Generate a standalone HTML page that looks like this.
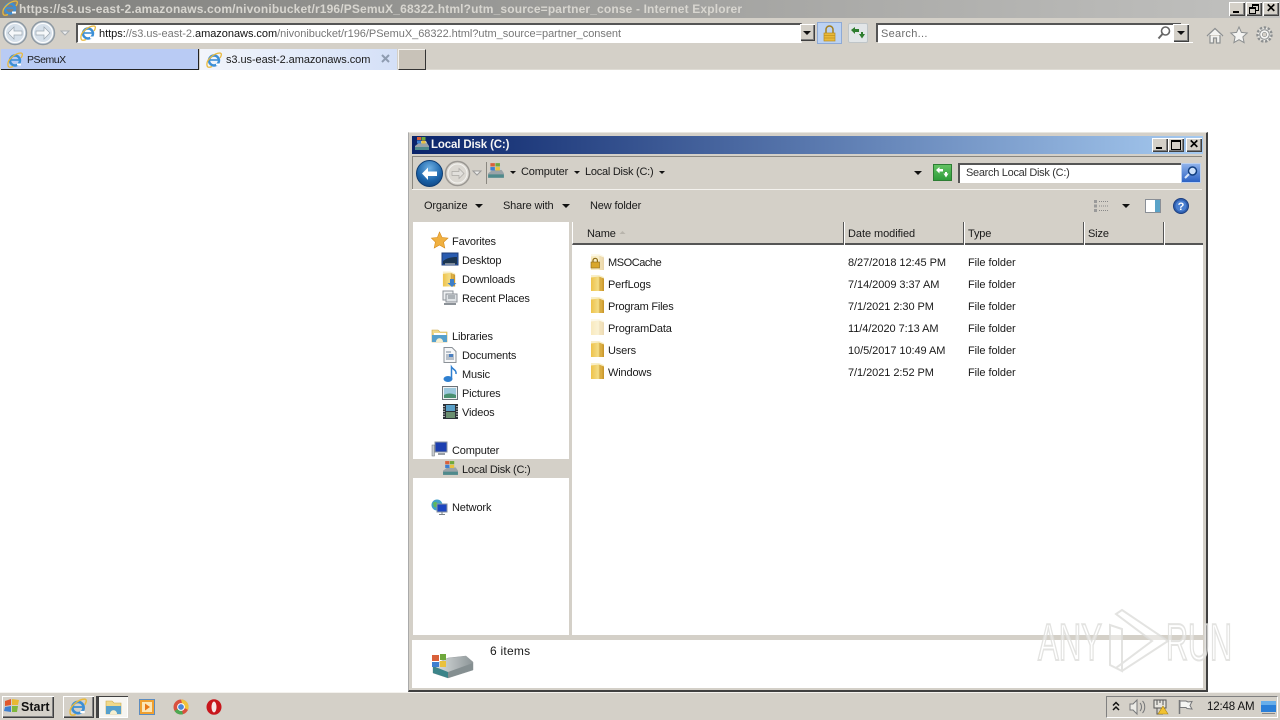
<!DOCTYPE html>
<html><head><meta charset="utf-8"><title>Local Disk (C:)</title>
<style>
html,body{margin:0;padding:0;width:1280px;height:720px;overflow:hidden;background:#fff}
body{position:relative;font:11px "Liberation Sans",sans-serif;color:#111}
.a{position:absolute}
.t{position:absolute;white-space:nowrap;line-height:14px;font-size:11px;color:#1a1a1a;margin-top:1px;letter-spacing:-.15px}
.d{letter-spacing:-.06px}
svg{position:absolute;overflow:visible}
.btn{position:absolute;width:16px;height:14px;background:#d4d0c8;box-shadow:inset 1px 1px 0 #fff,inset -1px -1px 0 #404040,inset -2px -2px 0 #808080;color:#000}
.ddb{position:absolute;background:#d4d0c8;box-shadow:inset 1px 1px 0 #fff,inset -1px -1px 0 #404040,inset -2px -2px 0 #808080}
.tri{position:absolute;width:0;height:0;border-left:4px solid transparent;border-right:4px solid transparent;border-top:4px solid #111}
.hd{position:absolute;top:222px;height:23px;width:1px;background:#555;box-shadow:1px 0 0 #fff}
</style></head><body>
<svg width="0" height="0" style="position:absolute"><defs>
<linearGradient id="fg" x1="0" x2="1"><stop offset="0" stop-color="#eec24a"/><stop offset=".55" stop-color="#f3dc85"/><stop offset=".75" stop-color="#e3b546"/><stop offset="1" stop-color="#c4932a"/></linearGradient>
<symbol id="ie" viewBox="0 0 16 16"><circle cx="8" cy="8.500" r="5" fill="none" stroke="#3c8fd6" stroke-width="2.400"/><path d="M4 8h8.500" stroke="#3c8fd6" stroke-width="1.600"/><path d="M10 12.500h4" stroke="#fff" stroke-width="2"/><path d="M1 13C0 8 8 1 14 1c2 0 1.500 3 0 5" fill="none" stroke="#e9b93c" stroke-width="1.300"/><path d="M1 13c0 3 3 2.500 5 1.500" fill="none" stroke="#e9b93c" stroke-width="1.300"/></symbol>
<symbol id="fold" viewBox="0 0 16 16"><path d="M1 0h8l5 2v14H1z" fill="#f8eec8"/><path d="M1 2.500l8-1 5 2V16H1z" fill="url(#fg)"/><path d="M10 2v14" stroke="#c9a040" stroke-width=".8"/></symbol>
<symbol id="disk" viewBox="0 0 16 16"><path d="M1 10l4-3h8l2 3v4H1z" fill="#9aa3a8"/><path d="M1 11h14v3H1z" fill="#4f8a8c"/><path d="M3 7l1-2h8l1 2z" fill="#c9cfd2"/><rect x="3" y="1" width="4" height="3" fill="#d9603a"/><rect x="7.500" y="1" width="4" height="3" fill="#6fa83c"/><rect x="3" y="4.500" width="4" height="3" fill="#3d7fd0"/><rect x="7.500" y="4.500" width="4" height="3" fill="#eac13c"/></symbol>
</defs></svg>

<!-- IE title bar -->
<div class="a" style="left:0;top:0;width:1280px;height:18px;background:linear-gradient(90deg,#7f7f7c,#c1c1bf)"></div>
<svg style="left:2px;top:0" width="16" height="16"><use href="#ie" width="16" height="16"/></svg>
<div class="t" style="left:19px;top:1px;font-weight:bold;font-size:12px;color:#d8d6d0;letter-spacing:.15px">https://s3.us-east-2.amazonaws.com/nivonibucket/r196/PSemuX_68322.html?utm_source=partner_conse - Internet Explorer</div>
<div class="btn" style="left:1229px;top:2px"><div class="a" style="left:4px;top:9px;width:6px;height:2px;background:#000"></div></div>
<div class="btn" style="left:1246px;top:2px"><div class="a" style="left:6px;top:2px;width:5px;height:4px;border:1px solid #000;border-top-width:2px"></div><div class="a" style="left:3px;top:5px;width:5px;height:4px;border:1px solid #000;border-top-width:2px;background:#d4d0c8"></div></div>
<div class="btn" style="left:1263px;top:2px;font:bold 12px/13px 'Liberation Sans';text-align:center">✕</div>

<!-- IE toolbar -->
<div class="a" style="left:0;top:18px;width:1280px;height:52px;background:#d4d0c8"></div>
<div class="a" style="left:0;top:69px;width:1280px;height:1px;background:#dfdcd5"></div>
<svg style="left:2px;top:19px" width="70" height="28">
<g fill="#d6e0ea" stroke="#8f9aa3" stroke-width="1.500"><circle cx="13" cy="14" r="11.500"/><circle cx="41" cy="14" r="11.500"/></g>
<g fill="none" stroke="#fff" stroke-width="1"><circle cx="13" cy="14" r="9.500"/><circle cx="41" cy="14" r="9.500"/></g>
<path d="M6 14l6-6v4h8v4h-8v4z" fill="#f6f8fa" stroke="#9aa6b0" stroke-width=".7"/>
<path d="M48 14l-6-6v4h-8v4h8v4z" fill="#f6f8fa" stroke="#9aa6b0" stroke-width=".7"/>
<path d="M59 12h8l-4 4z" fill="#eef0f2" stroke="#a9aeb2"/>
</svg>
<div class="a" style="left:76px;top:23px;width:723px;height:17px;background:#fff;border-left:2px solid #555;border-top:2px solid #555;border-right:1px solid #e8e6e0;border-bottom:1px solid #fff"></div>
<svg style="left:80px;top:25px" width="16" height="16"><use href="#ie" width="16" height="16"/></svg>
<div class="t" style="left:99px;top:26px;color:#777;letter-spacing:-.03px"><span style="color:#111">https:</span>//s3.us-east-2.<span style="color:#111">amazonaws.com</span>/nivonibucket/r196/PSemuX_68322.html?utm_source=partner_consent</div>
<div class="ddb" style="left:800px;top:24px;width:15px;height:17px"><div class="tri" style="left:3px;top:7px"></div></div>
<div class="a" style="left:817px;top:22px;width:25px;height:22px;background:#bcd2f2;border:1px solid #8eaad6;box-sizing:border-box"></div>
<svg style="left:822px;top:25px" width="15" height="17"><path d="M4 8V4.500a3.500 3.500 0 017 0V8" fill="none" stroke="#a37f1e" stroke-width="1.500"/><rect x="2" y="8" width="11" height="8" fill="#e8b93a" stroke="#b98c20" stroke-width=".7"/><path d="M2 10.500h11M2 13h11" stroke="#c2921f" stroke-width=".7"/></svg>
<div class="a" style="left:848px;top:23px;width:20px;height:20px;background:#e2e6e8;border:1px solid #bfc5c8;border-radius:2px;box-sizing:border-box"></div>
<svg style="left:851px;top:27px" width="15" height="12"><path d="M0 3l4-3v2h4v3H4v2z" fill="#2e7d2e"/><path d="M14 7l-3 4.500L8 7h2V5h2v2z" fill="#2e7d2e"/></svg>
<div class="a" style="left:876px;top:23px;width:303px;height:17px;background:#fff;border-left:2px solid #555;border-top:2px solid #555"></div>
<div class="a" style="left:878px;top:42px;width:315px;height:1px;background:#fff"></div>
<div class="t" style="left:881px;top:26px;color:#6d6d6d;letter-spacing:.3px">Search...</div>
<svg style="left:1157px;top:26px" width="14" height="14"><circle cx="8.500" cy="5" r="4" fill="none" stroke="#666" stroke-width="1.600"/><path d="M5.500 8L1.500 12.500" stroke="#666" stroke-width="2"/></svg>
<div class="ddb" style="left:1173px;top:24px;width:16px;height:18px"><div class="tri" style="left:4px;top:7px"></div></div>
<svg style="left:1206px;top:27px" width="18" height="17"><path d="M1 9l8-7.500L17 9M4 8v8h3.500v-5h3v5H14V8" fill="#f3f3f1" stroke="#8c8f90" stroke-width="1.200"/></svg>
<svg style="left:1230px;top:26px" width="18" height="17"><path d="M9 1l2.400 5.400 5.800.6-4.300 3.900 1.200 5.700L9 13.700l-5.100 2.900 1.200-5.700L.8 7l5.800-.6z" fill="#f4f4f2" stroke="#8c8f90"/></svg>
<svg style="left:1256px;top:26px" width="17" height="17"><circle cx="8.500" cy="8.500" r="7" fill="#efeeea" stroke="#8c8f90" stroke-width="2.400" stroke-dasharray="2.400 1.600"/><circle cx="8.500" cy="8.500" r="4.800" fill="#f5f5f3" stroke="#8c8f90"/><circle cx="8.500" cy="8.500" r="2.200" fill="#d4d0c8" stroke="#8c8f90" stroke-width=".7"/></svg>

<!-- tabs -->
<div class="a" style="left:1px;top:49px;width:197px;height:20px;background:#b9cbf4;border-right:1px solid #222;border-bottom:1px solid #222"></div>
<svg style="left:7px;top:52px" width="16" height="16"><use href="#ie" width="16" height="16"/></svg>
<div class="t" style="left:27px;top:52px;font-size:10.500px;letter-spacing:-.45px">PSemuX</div>
<div class="a" style="left:200px;top:49px;width:197px;height:21px;background:linear-gradient(90deg,#f2f5fb,#d4e0f7)"></div>
<svg style="left:206px;top:52px" width="16" height="16"><use href="#ie" width="16" height="16"/></svg>
<div class="t" style="left:226px;top:52px;letter-spacing:-.07px">s3.us-east-2.amazonaws.com</div>
<svg style="left:381px;top:54px" width="10" height="10"><path d="M1 1l7 7M8 1L1 8" stroke="#8e9cb0" stroke-width="2"/></svg>
<div class="a" style="left:398px;top:49px;width:28px;height:21px;background:#c8c2b8;border-top:1px solid #f4f2ee;border-left:1px solid #f4f2ee;border-right:1px solid #333;border-bottom:1px solid #333;box-sizing:border-box"></div>

<!-- Explorer window -->
<div class="a" style="left:408px;top:132px;width:800px;height:560px;background:#d4d0c8;border-right:2px solid #404040;border-bottom:2px solid #404040;border-left:1px solid #aaa;border-top:1px solid #e8e6e0;box-sizing:border-box"></div>
<div class="a" style="left:412px;top:136px;width:791px;height:18px;background:linear-gradient(90deg,#0a246a,#a6caf0)"></div>
<svg style="left:414px;top:136px" width="16" height="16"><use href="#disk" width="16" height="16"/></svg>
<div class="t" style="left:431px;top:137px;color:#f4f4f4;font-weight:bold;font-size:11.500px">Local Disk (C:)</div>
<div class="btn" style="left:1152px;top:138px"><div class="a" style="left:4px;top:9px;width:6px;height:2px;background:#000"></div></div>
<div class="btn" style="left:1168px;top:138px"><div class="a" style="left:3px;top:2px;width:8px;height:7px;border:1px solid #000;border-top-width:2px"></div></div>
<div class="btn" style="left:1186px;top:138px;font:bold 12px/13px 'Liberation Sans';text-align:center">✕</div>

<!-- nav bar -->
<div class="a" style="left:412px;top:156px;width:790px;height:1px;background:#8a8780"></div>
<div class="a" style="left:412px;top:189px;width:790px;height:1px;background:#f4f2ee"></div>
<div class="a" style="left:412px;top:157px;width:1px;height:32px;background:#8a8780"></div>
<svg style="left:415px;top:159px" width="70" height="28">
<defs><radialGradient id="bb" cx=".5" cy=".3" r=".8"><stop offset="0" stop-color="#6eb0e4"/><stop offset=".6" stop-color="#1a62a8"/><stop offset="1" stop-color="#0e3f7a"/></radialGradient></defs>
<circle cx="14.500" cy="14.500" r="13" fill="url(#bb)" stroke="#0d3c72"/>
<path d="M7 14.500l6-6v4h9v4.500h-9v4z" fill="#fff"/>
<circle cx="42.500" cy="14.500" r="12" fill="#dbd8d2" stroke="#9a9792" stroke-width="1.500"/>
<circle cx="42.500" cy="14.500" r="9.500" fill="none" stroke="#f4f3f0"/>
<path d="M49 14.500l-5-5v3h-7v4h7v3z" fill="#e2e0dc" stroke="#aaa8a4" stroke-width=".7"/>
<path d="M58 12h8l-4 4z" fill="#eeeeec" stroke="#999"/>
</svg>
<div class="a" style="left:486px;top:162px;width:1px;height:22px;background:#8a8780"></div>
<svg style="left:487px;top:162px" width="18" height="18"><use href="#disk" width="18" height="18"/></svg>
<div class="tri" style="left:510px;top:171px;border-width:3px 3px 0;"></div>
<div class="t" style="left:521px;top:164px">Computer</div>
<div class="tri" style="left:574px;top:171px;border-width:3px 3px 0;"></div>
<div class="t" style="left:585px;top:164px;letter-spacing:-.25px">Local Disk (C:)</div>
<div class="tri" style="left:659px;top:171px;border-width:3px 3px 0;"></div>
<div class="tri" style="left:914px;top:171px"></div>
<div class="a" style="left:933px;top:164px;width:19px;height:17px;background:linear-gradient(#62c262,#2f9c3a);border:1px solid #2d7d33;box-sizing:border-box"></div>
<svg style="left:936px;top:167px" width="13" height="11"><path d="M0 3l3.500-3v2H7v2.500H3.500V6.500z" fill="#fff"/><path d="M12.500 6.500L10 10.500 7.500 6.500h1.500V5h2v1.500z" fill="#fff"/></svg>
<div class="a" style="left:958px;top:163px;width:221px;height:18px;background:#fff;border-left:2px solid #555;border-top:2px solid #555"></div>
<div class="t" style="left:966px;top:165px;color:#333;letter-spacing:-.3px">Search Local Disk (C:)</div>
<div class="a" style="left:1181px;top:163px;width:20px;height:20px;background:linear-gradient(#8fb2ea,#2b62c4);border:1px solid #bcd0ee;box-sizing:border-box"></div>
<svg style="left:1183px;top:165px" width="16" height="16"><circle cx="9.500" cy="6" r="4" fill="#cfe2fa" stroke="#123f80" stroke-width="1.500"/><path d="M6 9l-4 4" stroke="#d8e6fa" stroke-width="2"/></svg>

<!-- command bar -->
<div class="t" style="left:424px;top:198px">Organize</div>
<div class="tri" style="left:475px;top:204px"></div>
<div class="t" style="left:503px;top:198px">Share with</div>
<div class="tri" style="left:562px;top:204px"></div>
<div class="t" style="left:590px;top:198px">New folder</div>
<svg style="left:1094px;top:199px" width="16" height="14"><g fill="#9a9a9a"><rect x="0" y="1" width="3" height="3"/><rect x="0" y="5.500" width="3" height="3"/><rect x="0" y="10" width="3" height="3"/></g><g stroke="#888" stroke-dasharray="1 1"><path d="M5 2.500h10M5 7h10M5 11.500h10"/></g></svg>
<div class="tri" style="left:1122px;top:204px"></div>
<svg style="left:1145px;top:199px" width="16" height="14"><rect x=".5" y=".5" width="15" height="13" fill="#fff" stroke="#8a8f96"/><rect x="10" y="1" width="5" height="12" fill="#5aa3c8"/></svg>
<svg style="left:1173px;top:198px" width="16" height="16"><circle cx="8" cy="8" r="7.500" fill="#2f5fb0" stroke="#1d3f80"/><circle cx="8" cy="8" r="5.500" fill="#4a7fd0"/><text x="8" y="12" text-anchor="middle" font-family="Liberation Sans" font-weight="bold" font-size="11" fill="#fff">?</text></svg>

<!-- sidebar -->
<div class="a" style="left:413px;top:222px;width:156px;height:413px;background:#fff"></div>
<div class="a" style="left:413px;top:459px;width:156px;height:19px;background:#d4d0c8"></div>
<svg style="left:431px;top:232px" width="17" height="16"><path d="M8.500 0l2.500 5.400 6 .7-4.400 4 1.200 5.900-5.300-3-5.300 3 1.200-5.900L.4 6.100l6-.7z" fill="#f0b040" stroke="#d48a1c" stroke-width=".6"/></svg>
<div class="t" style="left:452px;top:234px">Favorites</div>
<svg style="left:442px;top:252px" width="16" height="15"><rect x="0" y="1" width="16" height="12" fill="#2a5cb0" stroke="#1e3d78"/><path d="M1 9c4-3 8-4 14-4v7H1z" fill="#1c3550"/><path d="M3 12h10" stroke="#ddd"/></svg>
<div class="t" style="left:462px;top:253px">Desktop</div>
<svg style="left:442px;top:271px" width="16" height="16"><use href="#fold" width="15" height="16"/><path d="M8 8h4v4h2.500l-4.500 4-4.500-4H8z" fill="#3f7fc8"/></svg>
<div class="t" style="left:462px;top:272px">Downloads</div>
<svg style="left:442px;top:290px" width="16" height="16"><rect x="1" y="1" width="10" height="9" fill="#eef0f2" stroke="#8c9298"/><rect x="4" y="4" width="11" height="8" fill="#dfe3e6" stroke="#8c9298"/><path d="M2 14h12" stroke="#8c9298" stroke-width="2"/><path d="M6 6h7M6 8h7" stroke="#7a8288"/></svg>
<div class="t" style="left:462px;top:291px;letter-spacing:-.25px">Recent Places</div>
<svg style="left:431px;top:328px" width="17" height="15"><path d="M1 2h6l2 2h7v10H1z" fill="#f0d98a" stroke="#caa84a" stroke-width=".6"/><path d="M3 5h12v2H3z" fill="#fff"/><path d="M1 7h15v7H1z" fill="#56a0cc"/><path d="M5 14c0-5 7-5 7 0" fill="#f6efd0"/></svg>
<div class="t" style="left:452px;top:329px">Libraries</div>
<svg style="left:443px;top:347px" width="14" height="16"><path d="M1 .5h8l4 4v11H1z" fill="#f6f7f8" stroke="#8b9197"/><path d="M3 5h5M3 8h8M3 10h8M3 12h8" stroke="#7b8a9a"/><rect x="6" y="7" width="4" height="3" fill="#4a7fc0"/></svg>
<div class="t" style="left:462px;top:348px">Documents</div>
<svg style="left:443px;top:366px" width="15" height="16"><ellipse cx="5" cy="13" rx="4.500" ry="3" fill="#2e7fd0"/><path d="M8.500 13V1c2 3 5 3 4.500 7" fill="none" stroke="#2e7fd0" stroke-width="1.500"/></svg>
<div class="t" style="left:462px;top:367px">Music</div>
<svg style="left:442px;top:386px" width="16" height="14"><rect x=".5" y=".5" width="15" height="13" fill="#eef0f2" stroke="#6b7278"/><rect x="2" y="2" width="12" height="10" fill="#9cc8dc"/><path d="M2 9c3-2 8-2 12 0v3H2z" fill="#4a9070"/></svg>
<div class="t" style="left:462px;top:386px">Pictures</div>
<svg style="left:443px;top:404px" width="15" height="15"><rect width="15" height="15" fill="#2c3238"/><rect x="3" y="1" width="9" height="6" fill="#5aa0c8"/><rect x="3" y="8" width="9" height="6" fill="#6a8f70"/><path d="M1 2v11M14 2v11" stroke="#ddd" stroke-dasharray="1 1.500" stroke-width="1.500"/></svg>
<div class="t" style="left:462px;top:405px">Videos</div>
<svg style="left:431px;top:442px" width="17" height="16"><rect x="4" y="0" width="12" height="10" fill="#1c3fb0" stroke="#8a93a0"/><rect x="7" y="11" width="7" height="2" fill="#9aa0a6"/><rect x="1" y="3" width="2.500" height="11" fill="#c8ccd0" stroke="#6e7478" stroke-width=".5"/></svg>
<div class="t" style="left:452px;top:443px">Computer</div>
<svg style="left:442px;top:460px" width="17" height="17"><use href="#disk" width="17" height="17"/></svg>
<div class="t" style="left:462px;top:462px;letter-spacing:-.25px">Local Disk (C:)</div>
<svg style="left:431px;top:499px" width="17" height="16"><circle cx="6" cy="6" r="5.500" fill="#3f9fc8"/><path d="M2 4c2-2 4-1 5 1S5 9 3 8" fill="#5db85d"/><rect x="6" y="5" width="10" height="8" fill="#1c45c0" stroke="#8a93a0"/><path d="M11 13v2M8 15.500h6" stroke="#7a8288"/></svg>
<div class="t" style="left:452px;top:500px">Network</div>

<!-- file list -->
<div class="a" style="left:572px;top:245px;width:631px;height:390px;background:#fff"></div>
<div class="a" style="left:572px;top:222px;width:631px;height:23px;background:#d4d0c8;border-left:1px solid #fff;border-bottom:2px solid #555;box-sizing:border-box"></div>
<div class="hd" style="left:843px"></div><div class="hd" style="left:963px"></div><div class="hd" style="left:1083px"></div><div class="hd" style="left:1163px"></div>
<div class="t" style="left:587px;top:226px">Name</div>
<svg style="left:619px;top:230px" width="7" height="5"><path d="M.5 4l3-3 3 3z" fill="#b8b4ac"/></svg>
<div class="t d" style="left:848px;top:226px">Date modified</div>
<div class="t" style="left:968px;top:226px">Type</div>
<div class="t" style="left:1088px;top:226px">Size</div>

<svg style="left:590px;top:254px" width="16" height="16"><use href="#fold" width="16" height="16" opacity=".4"/><path d="M3 8V6.500a2.200 2.200 0 014.400 0V8" fill="none" stroke="#8a6a14" stroke-width="1.200"/><rect x="1" y="8" width="8.500" height="6" fill="#d9a72a" stroke="#8a6a14" stroke-width=".6"/></svg>
<div class="t" style="left:608px;top:255px;letter-spacing:-.45px">MSOCache</div><div class="t d" style="left:848px;top:255px">8/27/2018 12:45 PM</div><div class="t d" style="left:968px;top:255px">File folder</div>
<svg style="left:590px;top:275px" width="16" height="16"><use href="#fold" width="16" height="16"/></svg>
<div class="t" style="left:608px;top:277px">PerfLogs</div><div class="t d" style="left:848px;top:277px">7/14/2009 3:37 AM</div><div class="t d" style="left:968px;top:277px">File folder</div>
<svg style="left:590px;top:297px" width="16" height="16"><use href="#fold" width="16" height="16"/></svg>
<div class="t" style="left:608px;top:299px;letter-spacing:-.23px">Program Files</div><div class="t d" style="left:848px;top:299px">7/1/2021 2:30 PM</div><div class="t d" style="left:968px;top:299px">File folder</div>
<svg style="left:590px;top:319px" width="16" height="16"><use href="#fold" width="16" height="16" opacity=".35"/></svg>
<div class="t" style="left:608px;top:321px">ProgramData</div><div class="t d" style="left:848px;top:321px">11/4/2020 7:13 AM</div><div class="t d" style="left:968px;top:321px">File folder</div>
<svg style="left:590px;top:341px" width="16" height="16"><use href="#fold" width="16" height="16"/></svg>
<div class="t" style="left:608px;top:343px">Users</div><div class="t d" style="left:848px;top:343px">10/5/2017 10:49 AM</div><div class="t d" style="left:968px;top:343px">File folder</div>
<svg style="left:590px;top:363px" width="16" height="16"><use href="#fold" width="16" height="16"/></svg>
<div class="t" style="left:608px;top:365px">Windows</div><div class="t d" style="left:848px;top:365px">7/1/2021 2:52 PM</div><div class="t d" style="left:968px;top:365px">File folder</div>

<!-- details pane -->
<div class="a" style="left:412px;top:640px;width:791px;height:48px;background:#fff"></div>
<svg style="left:430px;top:653px" width="46" height="28"><defs><linearGradient id="hd" x1="0" x2="1"><stop offset="0" stop-color="#dfe3e4"/><stop offset="1" stop-color="#8d9597"/></linearGradient></defs>
<path d="M3 12L18 5 36 3l7 6 0 8-25 8-15-5z" fill="url(#hd)" stroke="#9aa0a2" stroke-width=".5"/><path d="M3 13l15 6v6L3 20z" fill="#3c8489"/><path d="M18 19l25-9v7l-25 8z" fill="#858f91"/><rect x="2" y="2" width="7" height="6" fill="#d9603a"/><rect x="10" y="1" width="6" height="6" fill="#6fa83c"/><rect x="2" y="9" width="7" height="5" fill="#3d7fd0"/><rect x="10" y="8" width="6" height="6" fill="#eac13c"/></svg>
<div class="t" style="left:490px;top:643px;font-size:12px;letter-spacing:.25px">6 items</div>

<!-- taskbar -->
<div class="a" style="left:0;top:692px;width:1280px;height:28px;background:#d4d0c8;border-top:1px solid #f4f2ee;box-sizing:border-box"></div>
<div class="a" style="left:2px;top:696px;width:52px;height:22px;background:#d4d0c8;box-shadow:inset 1px 1px 0 #fff,inset -1px -1px 0 #404040,inset -2px -2px 0 #808080"></div>
<svg style="left:4px;top:698px" width="16" height="16"><path d="M1 3l6-2v6l-6 1z" fill="#e0582c"/><path d="M8 1l7 1-1 5-6 0z" fill="#e8b832"/><path d="M1 9l6-1v6l-7-1z" fill="#3f7fd0"/><path d="M8 8h6l-1 6-5 0z" fill="#7fb83c"/></svg>
<div class="t" style="left:21px;top:699px;font-weight:bold;font-size:12.500px;color:#111;letter-spacing:0">Start</div>
<div class="a" style="left:63px;top:696px;width:31px;height:22px;box-shadow:inset 1px 1px 0 #fff,inset -1px -1px 0 #404040,inset -2px -2px 0 #808080"></div>
<svg style="left:69px;top:698px" width="18" height="18"><use href="#ie" width="18" height="18"/></svg>
<div class="a" style="left:96px;top:696px;width:2px;height:22px;background:#444"></div>
<div class="a" style="left:98px;top:696px;width:30px;height:22px;background:#f6f5f1;box-shadow:inset 1px 1px 0 #404040,inset -1px -1px 0 #fff"></div>
<svg style="left:105px;top:699px" width="17" height="16"><path d="M1 2h6l2 2h7v11H1z" fill="#f0d98a" stroke="#caa84a" stroke-width=".6"/><path d="M1 7h15v8H1z" fill="#56a0cc"/><path d="M5 15c0-5 7-5 7 0" fill="#f6efd0"/></svg>
<svg style="left:139px;top:699px" width="16" height="16"><rect x=".5" y=".5" width="15" height="15" fill="#f0a030" stroke="#5c8cc0"/><rect x="3" y="3" width="10" height="10" fill="#fbe6b8"/><path d="M6 4.500l5 3.500-5 3.500z" fill="#e87818"/></svg>
<svg style="left:173px;top:699px" width="16" height="16"><circle cx="8" cy="8" r="7.500" fill="#d9503f"/><path d="M8 8L1.500 12A7.500 7.500 0 0 0 10 15.200z" fill="#4da851"/><path d="M8 .5A7.500 7.500 0 0 1 15 11L10 8z" fill="#f0c33c"/><circle cx="8" cy="8" r="3.400" fill="#4a86d8" stroke="#fff"/></svg>
<svg style="left:206px;top:699px" width="16" height="16"><ellipse cx="8" cy="8" rx="7.500" ry="7.800" fill="#c8161c"/><ellipse cx="8" cy="8" rx="2.500" ry="5.500" fill="#f6e8e8"/></svg>

<!-- tray -->
<div class="a" style="left:1106px;top:696px;width:172px;height:22px;border:1px solid;border-color:#808080 #fff #fff #808080;box-sizing:border-box"></div>
<svg style="left:1112px;top:701px" width="8" height="11"><path d="M1 4.500L4 1.500 7 4.500M1 9L4 6l3 3" fill="none" stroke="#111" stroke-width="1.500"/></svg>
<svg style="left:1129px;top:699px" width="17" height="16"><path d="M1 5h3l4-4v14l-4-4H1z" fill="#ecebe6" stroke="#77787a"/><path d="M11 4c2 2 2 6 0 8M13.500 2c3 3 3 9 0 12" fill="none" stroke="#77787a"/></svg>
<svg style="left:1153px;top:699px" width="16" height="16"><path d="M1 1h12v8H1z" fill="#e8e6e0" stroke="#555"/><path d="M4 1v5M7 1v3M10 1v5" stroke="#555"/><path d="M4 9v6h6" stroke="#555" fill="none"/><path d="M10 7l5 8H5z" fill="#f2c230" stroke="#a88414" stroke-width=".6"/></svg>
<svg style="left:1178px;top:699px" width="15" height="16"><path d="M1.500 1v14" stroke="#77787a" stroke-width="1.500"/><path d="M2 2h6l2 1 4-.500-2 4 2 3.500-5-.500-1-1H2z" fill="#f5f5f2" stroke="#77787a"/></svg>
<div class="t" style="left:1207px;top:699px;color:#111;font-size:11.500px">12:48 AM</div>
<svg style="left:1261px;top:701px" width="15" height="13"><rect width="15" height="11" fill="#2a7fd8"/><rect y="0" width="15" height="4" fill="#67aeea"/><path d="M1 12.500h13" stroke="#888"/></svg>

<!-- watermark -->
<svg style="left:1030px;top:600px" width="210" height="80">
<g font-family="Liberation Sans" font-size="52" fill="#fff" fill-opacity=".45" stroke="#dcdcda" stroke-opacity=".8" stroke-width="2">
<text x="8" y="60" textLength="64" lengthAdjust="spacingAndGlyphs">ANY</text>
<text x="136" y="60" textLength="66" lengthAdjust="spacingAndGlyphs">RUN</text>
</g>
<path d="M80 25v40l12 6V29zM92 10l46 31-46 30-6-3 36-27-36-27z" fill="#fff" fill-opacity=".45" stroke="#dcdcda" stroke-opacity=".8" stroke-width="2"/>
</svg>
</body></html>
